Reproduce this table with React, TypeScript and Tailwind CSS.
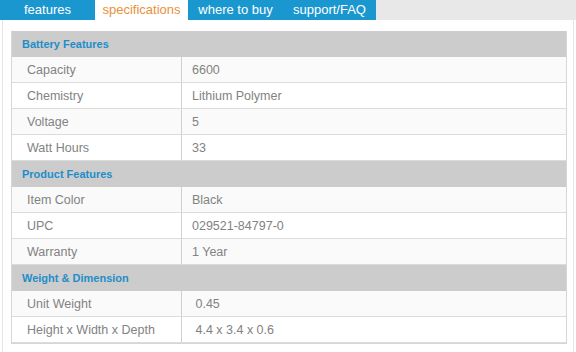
const sections = [
  {
    title: "Battery Features",
    rows: [
      ["Capacity", "6600"],
      ["Chemistry", "Lithium Polymer"],
      ["Voltage", "5"],
      ["Watt Hours", "33"],
    ],
  },
  {
    title: "Product Features",
    rows: [
      ["Item Color", "Black"],
      ["UPC", "029521-84797-0"],
      ["Warranty", "1 Year"],
    ],
  },
  {
    title: "Weight & Dimension",
    rows: [
      ["Unit Weight", "\u00a00.45"],
      ["Height x Width x Depth", "\u00a04.4 x 3.4 x 0.6"],
    ],
  },
];

const tabs = [
  { label: "features", w: "w-[95px]", active: false },
  { label: "specifications", w: "w-[93px]", active: true },
  { label: "where to buy", w: "w-[95px]", active: false },
  { label: "support/FAQ", w: "w-[93px]", active: false },
];

export default function App() {
  return (
    <div
      className="w-[576px] h-[352px] bg-white overflow-hidden"
      style={{ fontFamily: '"Liberation Sans", Arial, sans-serif' }}
    >
      <div className="flex h-[20px] bg-[#e8e8e8]">
        {tabs.map((t) => (
          <div
            key={t.label}
            className={
              t.active
                ? `${t.w} flex items-center justify-center bg-white text-[13px] text-[#e8913a]`
                : `${t.w} flex items-center justify-center bg-[#1b97d0] text-[13px] text-white`
            }
          >
            {t.label}
          </div>
        ))}
      </div>
      <div className="mx-[2px] h-[332px] border-x border-[#e6e6e6] pl-[8px] pr-[6px] pt-[11px]">
        <div className="border border-[#d6d6d6] border-t-0">
          {sections.map((s) => (
            <div key={s.title}>
              <div className="h-[26px] flex items-center bg-[#cccccc] pl-[10px] text-[11px] font-bold text-[#1f8ec8]">
                {s.title}
              </div>
              {s.rows.map(([k, v], i) => (
                <div
                  key={k}
                  className={
                    i % 2 === 0
                      ? "grid grid-cols-[170px_1fr] h-[26px] bg-[#fafafa] border-b border-[#dcdcdc] text-[12.5px] text-[#828282]"
                      : "grid grid-cols-[170px_1fr] h-[26px] bg-white border-b border-[#dcdcdc] text-[12.5px] text-[#828282]"
                  }
                >
                  <div className="flex items-center pl-[15px] pt-px border-r border-[#d0d0d0]">{k}</div>
                  <div className="flex items-center pl-[10px] pt-px">{v}</div>
                </div>
              ))}
            </div>
          ))}
        </div>
      </div>
    </div>
  );
}
